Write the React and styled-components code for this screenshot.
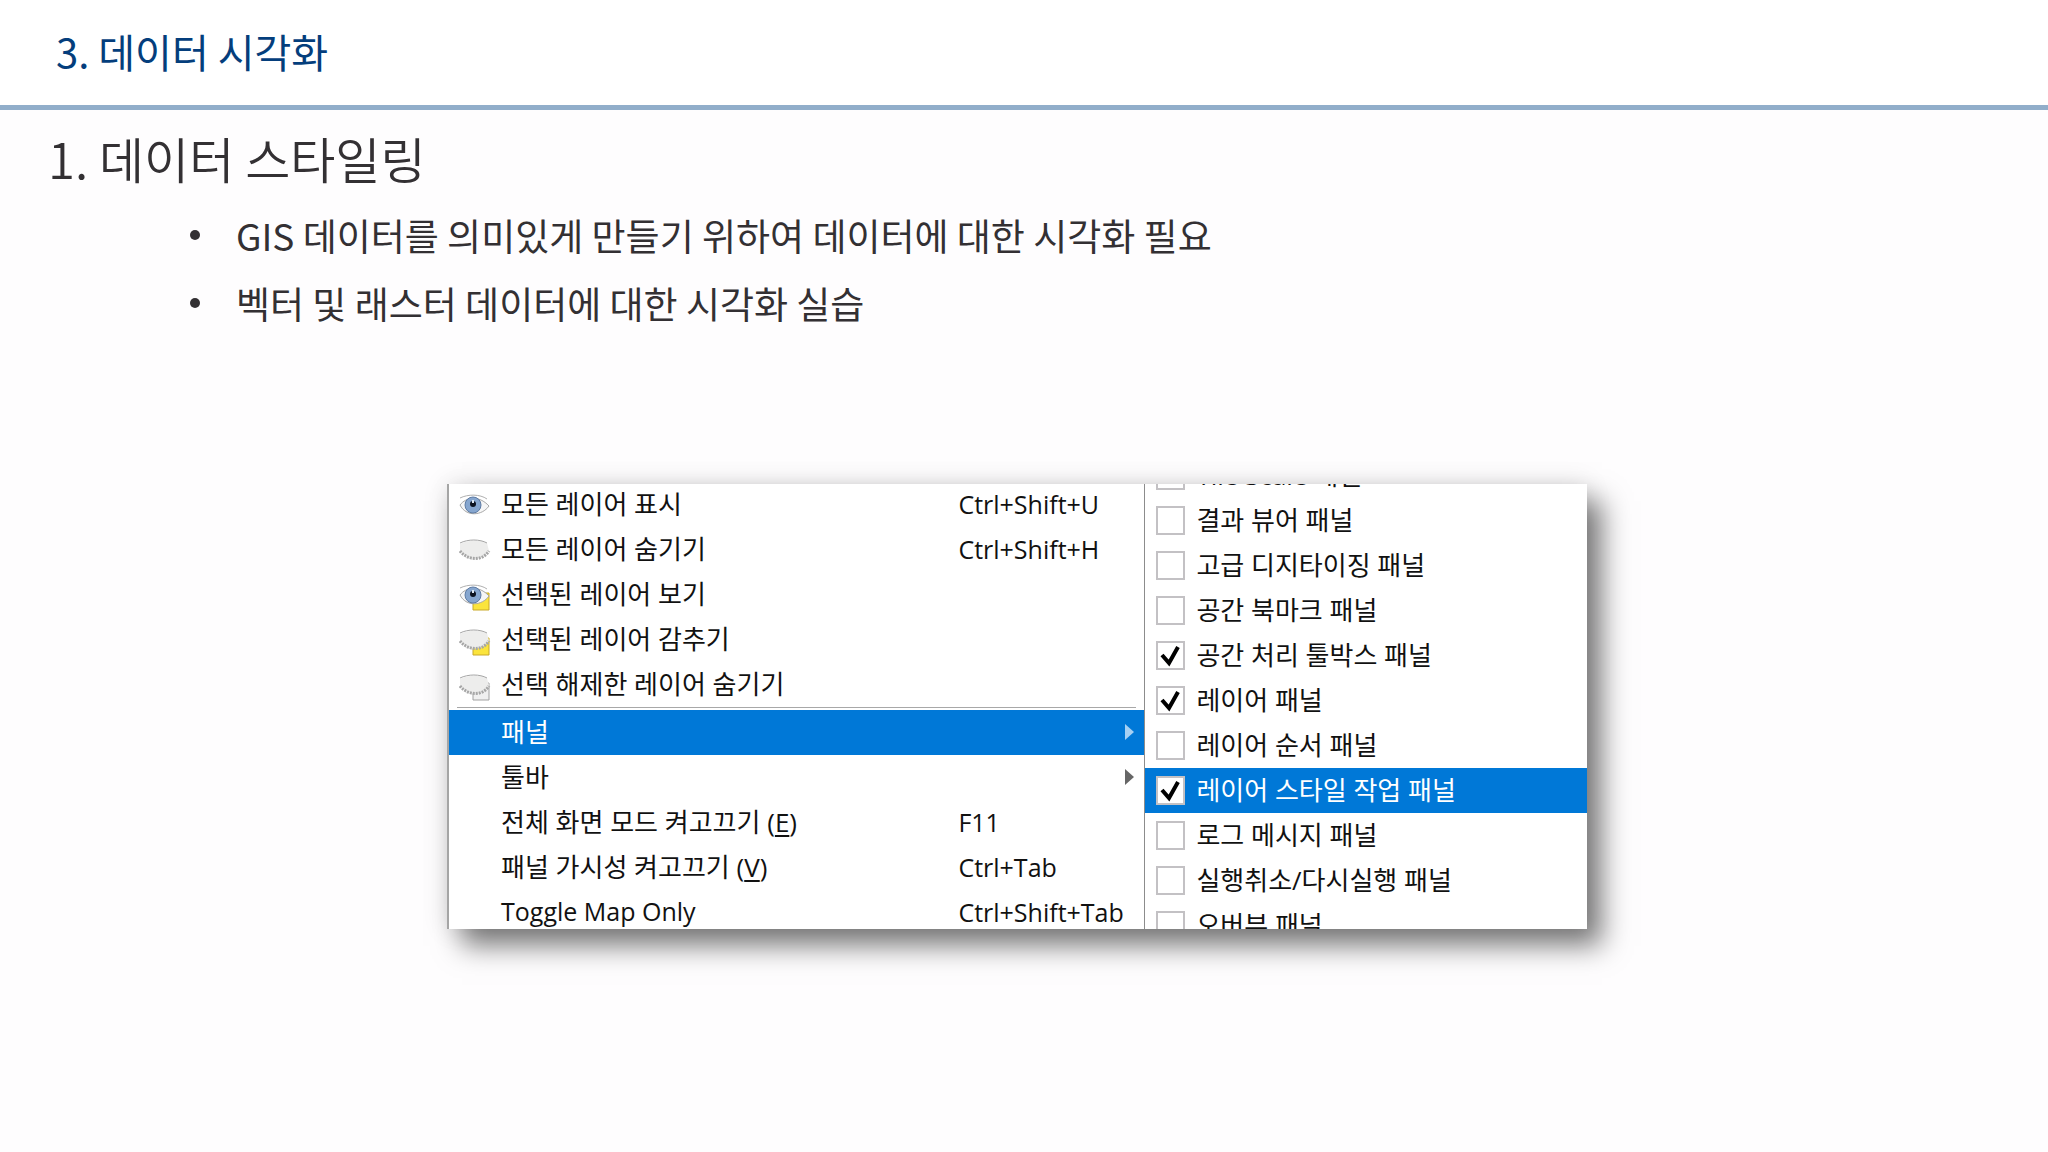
import styled, { createGlobalStyle } from 'styled-components';

const panels = [
    { label: 'Tile Scale 패널' },
    { label: '결과 뷰어 패널' },
    { label: '고급 디지타이징 패널' },
    { label: '공간 북마크 패널' },
    { label: '공간 처리 툴박스 패널', checked: true },
    { label: '레이어 패널', checked: true },
    { label: '레이어 순서 패널' },
    { label: '레이어 스타일 작업 패널', checked: true, active: true },
    { label: '로그 메시지 패널' },
    { label: '실행취소/다시실행 패널' },
    { label: '오버뷰 패널' },
];

function LayerIcon({ open, square }) {
    return (
        <svg width="32" height="32" viewBox="0 0 32 32" aria-hidden="true">
            {square && (
                <path
                    d="M14 14h16v17H14z"
                    fill={square === 'yellow' ? '#fbe43c' : '#f0f0f0'}
                    stroke={square === 'yellow' ? '#c9a92b' : '#a2a2a2'}
                />
            )}
            {open ? (
                <>
                    <path
                        d="M1 16C7 8 20 6 30 17C23 27 7 28 1 16z"
                        fill="#f6f6f6"
                        stroke="#a6a6a6"
                    />
                    <circle cx="14" cy="16" r="8" fill="#86a6cf" stroke="#5d7ba4" />
                    <circle cx="14" cy="15" r="3" fill="#0c1320" />
                    <path d="M13 11h2v3h-2z" fill="#dde8f4" />
                    <path d="M1 9C9 5 21 5 28 10" fill="none" stroke="#b0b0b0" />
                </>
            ) : (
                <>
                    <path
                        d="M1 10C8 6 22 5 28 9L30 17C24 27 8 27 1 17z"
                        fill="#ededec"
                    />
                    <path d="M1 9C9 5 21 5 28 9" fill="none" stroke="#a6a6a6" />
                    <path
                        d="M1 17C8 26 23 28 30 17"
                        fill="none"
                        stroke="#a6a6a6"
                        strokeWidth="3"
                        strokeDasharray="2 1"
                    />
                </>
            )}
        </svg>
    );
}

function Arrow() {
    return (
        <svg width="9" height="16" viewBox="0 0 9 16" aria-hidden="true">
            <path d="M0 0L9 8L0 16z" fill="currentColor" />
        </svg>
    );
}

function MenuItem({ icon, shortcut, submenu, active, latin, children }) {
    return (
        <Item type="button" $active={active} aria-haspopup={submenu && 'menu'}>
            <Icon>{icon}</Icon>
            <Label $latin={latin}>{children}</Label>
            <Shortcut>{shortcut}</Shortcut>
            <ArrowSlot $active={active}>{submenu && <Arrow />}</ArrowSlot>
        </Item>
    );
}

export default function App() {
    return (
        <>
            <GlobalStyle />
            <Header>
                <Title>3. 데이터 시각화</Title>
            </Header>
            <Main>
                <Heading>1. 데이터 스타일링</Heading>
                <Bullets>
                    <Bullet>
                        GIS 데이터를 의미있게 만들기 위하여 데이터에 대한 시각화 필요
                    </Bullet>
                    <Bullet>벡터 및 래스터 데이터에 대한 시각화 실습</Bullet>
                </Bullets>
                <Figure>
                    <Menu>
                        <MenuItem icon={<LayerIcon open />} shortcut="Ctrl+Shift+U">
                            모든 레이어 표시
                        </MenuItem>
                        <MenuItem icon={<LayerIcon />} shortcut="Ctrl+Shift+H">
                            모든 레이어 숨기기
                        </MenuItem>
                        <MenuItem icon={<LayerIcon open square="yellow" />}>
                            선택된 레이어 보기
                        </MenuItem>
                        <MenuItem icon={<LayerIcon square="yellow" />}>
                            선택된 레이어 감추기
                        </MenuItem>
                        <MenuItem icon={<LayerIcon square="grey" />}>
                            선택 해제한 레이어 숨기기
                        </MenuItem>
                        <Separator />
                        <MenuItem submenu active>
                            패널
                        </MenuItem>
                        <MenuItem submenu>툴바</MenuItem>
                        <MenuItem shortcut="F11">
                            전체 화면 모드 켜고끄기 (<u>E</u>)
                        </MenuItem>
                        <MenuItem shortcut="Ctrl+Tab">
                            패널 가시성 켜고끄기 (<u>V</u>)
                        </MenuItem>
                        <MenuItem shortcut="Ctrl+Shift+Tab" latin>
                            Toggle Map Only
                        </MenuItem>
                    </Menu>
                    <Submenu>
                        {panels.map(({ label, checked, active }) => (
                            <CheckItem key={label} $active={active}>
                                <Checkbox type="checkbox" defaultChecked={checked} />
                                <CheckLabel>{label}</CheckLabel>
                            </CheckItem>
                        ))}
                    </Submenu>
                </Figure>
            </Main>
        </>
    );
}

const GlobalStyle = createGlobalStyle`
    * {
        box-sizing: border-box;
    }

    body {
        margin: 0;
        background: #fefdfe;
        color: #333033;
        font-family: 'Noto Sans CJK KR', sans-serif;
    }
`;

const Header = styled.header`
    display: flex;
    align-items: center;
    height: 110px;
    padding: 0 56px 4px;
    background: #fff;
    border-bottom: 5px solid #91aeca;
`;

const Title = styled.h1`
    margin: 0;
    color: #043e7c;
    font-size: 40px;
    font-weight: 400;
    line-height: 56px;
`;

const Main = styled.main`
    padding: 14px 62px 80px 48px;
`;

const Heading = styled.h2`
    margin: 0;
    font-size: 49px;
    font-weight: 350;
    line-height: 68px;
`;

const Bullets = styled.ul`
    margin: 9px 0 0;
    padding: 0 0 0 142px;
    font-size: 37px;
    line-height: 68px;
    list-style: none;
`;

const Bullet = styled.li`
    display: flex;
    align-items: center;

    &::before {
        content: '';
        flex: none;
        width: 10px;
        height: 10px;
        margin-right: 36px;
        border-radius: 50%;
        background: currentColor;
    }
`;

const Figure = styled.section`
    display: flex;
    max-width: 1140px;
    height: 445px;
    margin: 147px auto 0;
    overflow: hidden;
    background: #fff;
    border-left: 2px solid #a5a5a5;
    box-shadow:
        15px 17px 26px rgba(0, 0, 0, 0.5),
        0 0 24px rgba(0, 0, 0, 0.12);
    color: #111;
    font-family: 'Open Sans', 'Noto Sans CJK KR', sans-serif;
    font-size: 26px;
`;

const Menu = styled.div`
    flex: 696;
    margin-top: -2px;
`;

const Item = styled.button`
    display: flex;
    align-items: center;
    width: 100%;
    height: 45px;
    padding: 0 10px;
    border: 0;
    background: ${({ $active }) => ($active ? '#0078d7' : 'transparent')};
    color: ${({ $active }) => ($active ? '#fff' : 'inherit')};
    font: inherit;
    text-align: left;
    white-space: nowrap;

    u {
        text-decoration-thickness: 2px;
        text-underline-offset: 3px;
    }
`;

const Icon = styled.span`
    display: flex;
    width: 42px;
`;

const Label = styled.span`
    flex: 1;
    padding-bottom: 4px;
    font-size: ${({ $latin }) => ($latin ? '25px' : 'inherit')};
`;

const Shortcut = styled.span`
    width: 167px;
    padding-bottom: 2px;
    font-size: 25px;
`;

const ArrowSlot = styled.span`
    display: flex;
    width: 9px;
    padding-bottom: 2px;
    color: ${({ $active }) => ($active ? '#a6d0f3' : '#666')};
`;

const Separator = styled.hr`
    height: 1px;
    margin: 0 8px 2px;
    border: 0;
    background: #a8a8a8;
`;

const Submenu = styled.div`
    flex: 442;
    margin-top: -31px;
    border-left: 1px solid #8c8c8c;
`;

const CheckItem = styled.label`
    display: flex;
    align-items: center;
    gap: 11px;
    height: 45px;
    padding-left: 11px;
    background: ${({ $active }) => ($active ? '#0078d7' : 'transparent')};
    color: ${({ $active }) => ($active ? '#fff' : 'inherit')};
    white-space: nowrap;
`;

const CheckLabel = styled.span`
    padding-bottom: 4px;
`;

const Checkbox = styled.input`
    appearance: none;
    width: 29px;
    height: 29px;
    margin: 0;
    border: 2px solid #c3c1c4;
    background: #fff;

    &:checked {
        background: #fff
            url("data:image/svg+xml,%3Csvg xmlns='http://www.w3.org/2000/svg' viewBox='0 0 25 25'%3E%3Cpath d='M4 12L11 20L20 4' fill='none' stroke='%23000' stroke-width='4'/%3E%3C/svg%3E");
    }
`;
